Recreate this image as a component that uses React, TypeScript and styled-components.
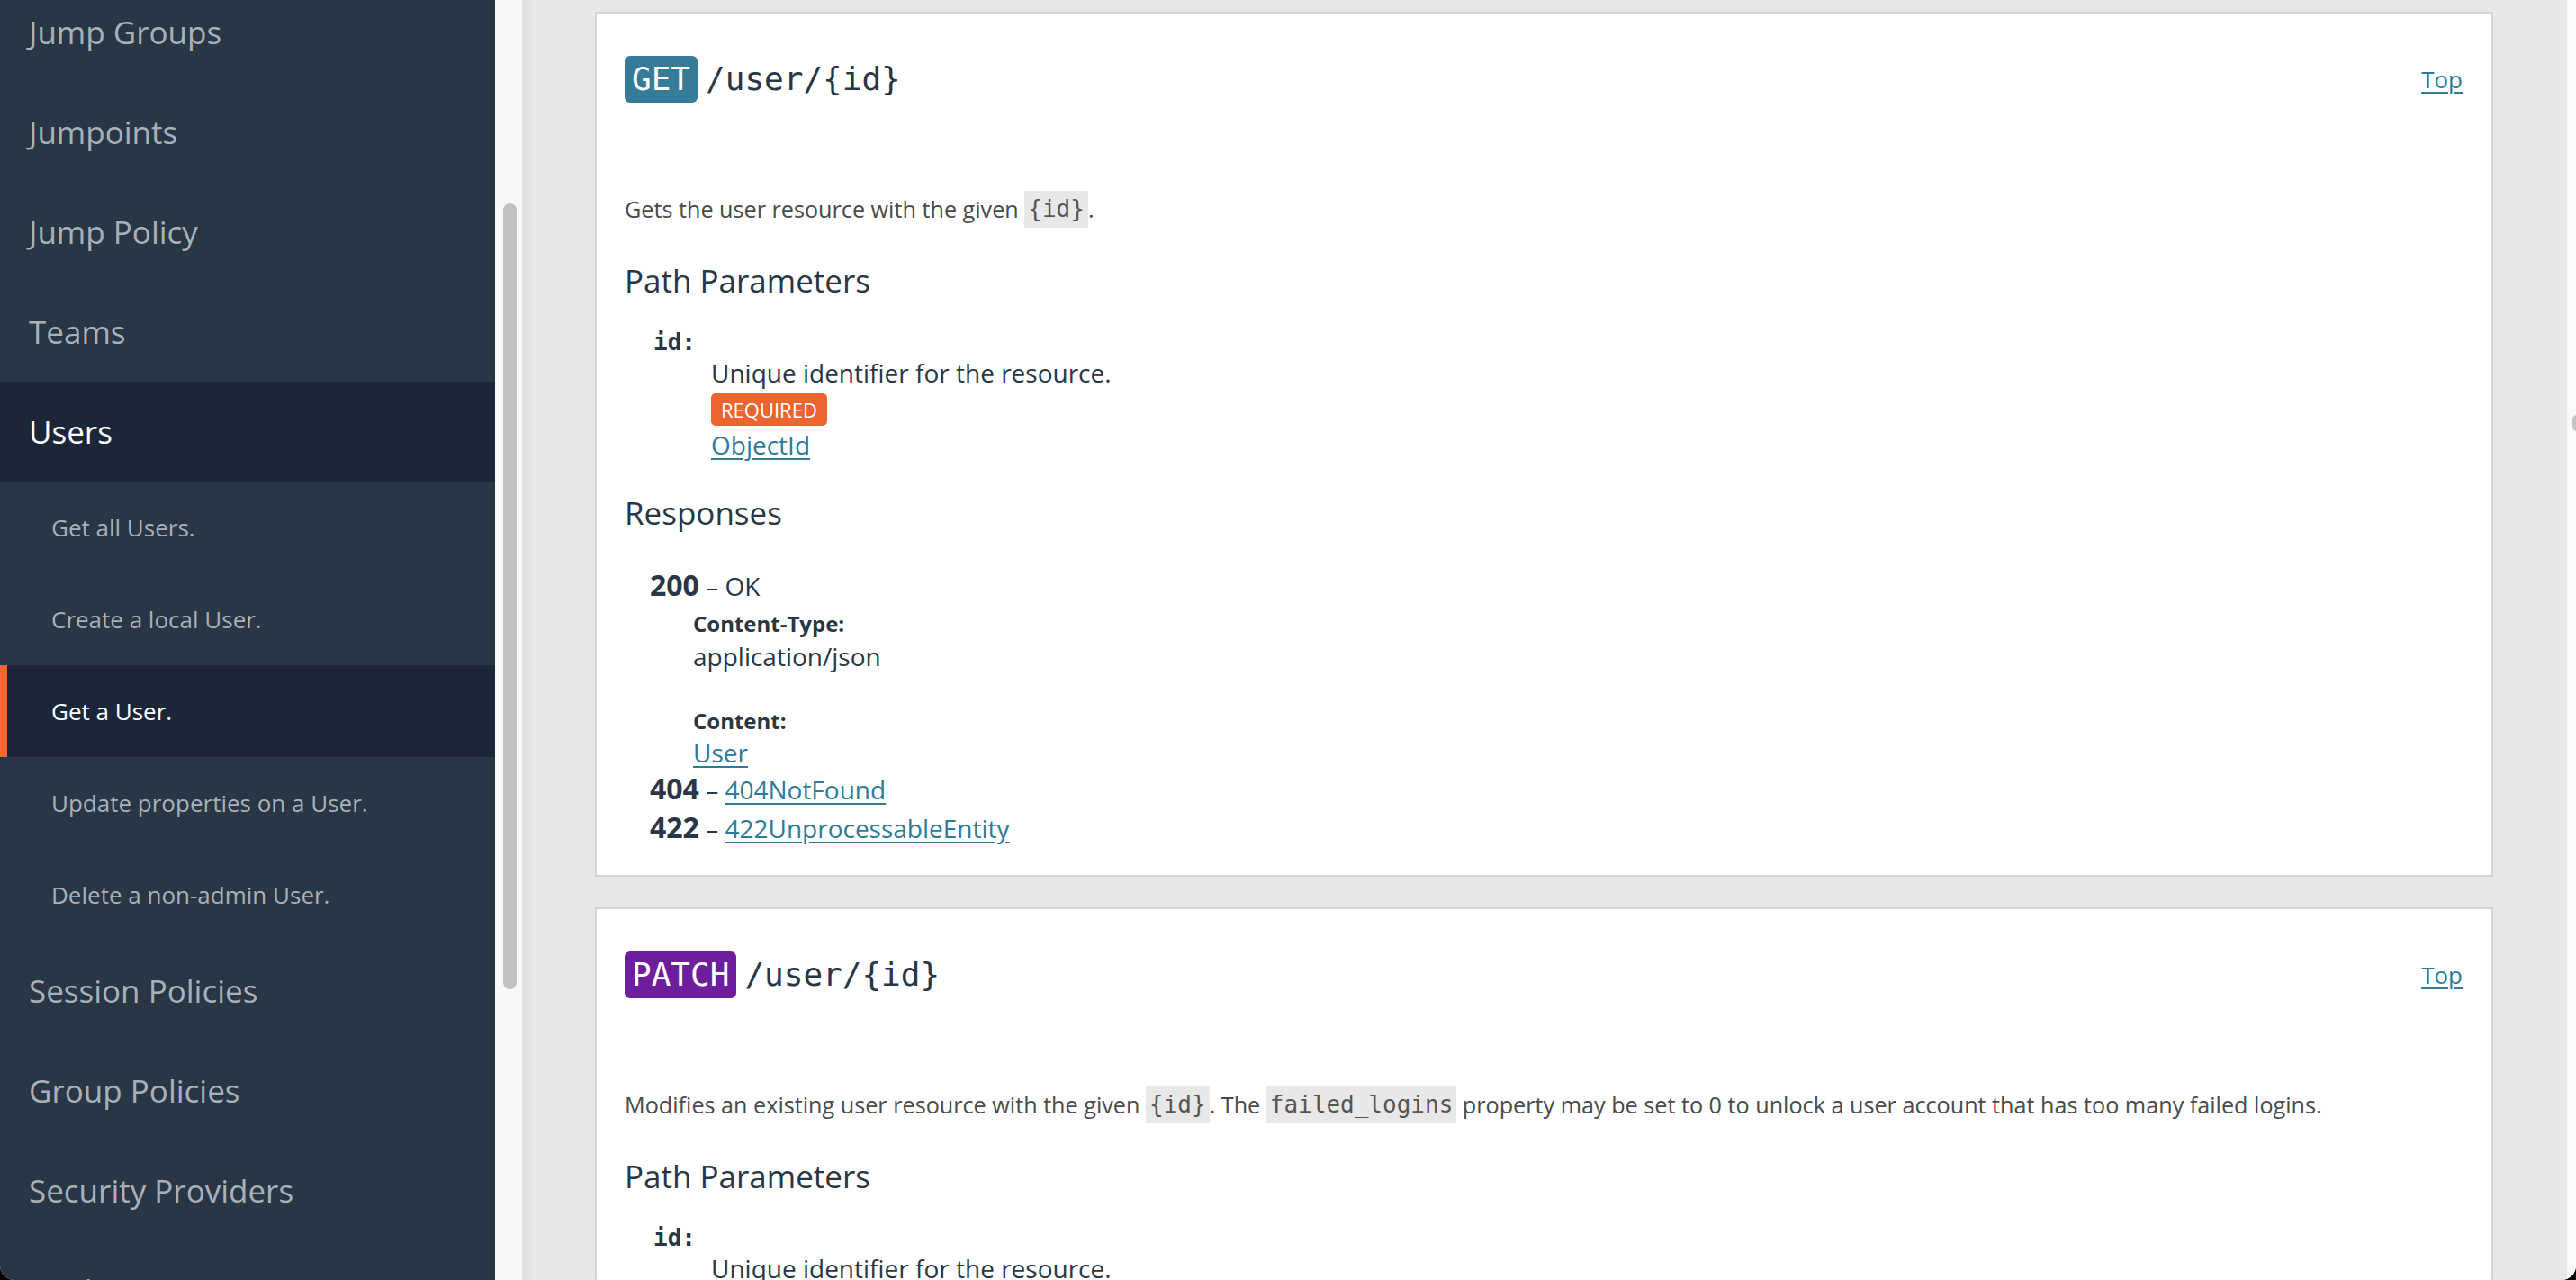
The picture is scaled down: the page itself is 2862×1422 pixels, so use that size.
import styled, { createGlobalStyle } from 'styled-components';

interface NavEntry {
  label: string;
  active?: boolean;
  children?: { label: string; active?: boolean }[];
}

const nav: NavEntry[] = [
  { label: 'Jump Groups' },
  { label: 'Jumpoints' },
  { label: 'Jump Policy' },
  { label: 'Teams' },
  {
    label: 'Users',
    active: true,
    children: [
      { label: 'Get all Users.' },
      { label: 'Create a local User.' },
      { label: 'Get a User.', active: true },
      { label: 'Update properties on a User.' },
      { label: 'Delete a non-admin User.' },
    ],
  },
  { label: 'Session Policies' },
  { label: 'Group Policies' },
  { label: 'Security Providers' },
  { label: 'Vault Accounts' },
];

const SANS = `'Open Sans', 'Liberation Sans', sans-serif`;
const MONO = `'DejaVu Sans Mono', 'Liberation Mono', monospace`;

const App = () => {
  return (
    <>
      <GlobalStyle />
      <S.Shell>
        <S.Sidebar>
          <S.NavList>
            {nav.map((item) => (
              <li key={item.label}>
                <S.NavItem $active={item.active}>{item.label}</S.NavItem>
                {item.children && (
                  <S.SubList>
                    {item.children.map((child) => (
                      <S.SubItem key={child.label} $active={child.active}>
                        {child.label}
                      </S.SubItem>
                    ))}
                  </S.SubList>
                )}
              </li>
            ))}
          </S.NavList>
        </S.Sidebar>
        <S.SidebarTrack>
          <S.SidebarThumb />
        </S.SidebarTrack>

        <S.Main>
          <S.Card>
            <S.CardHeader>
              <S.Title>
                <S.Method $color="#367b97">GET</S.Method>
                <S.Path>/user/{'{id}'}</S.Path>
              </S.Title>
              <S.TopLink href="#">Top</S.TopLink>
            </S.CardHeader>
            <S.Description>
              Gets the user resource with the given <S.Code>{'{id}'}</S.Code>.
            </S.Description>

            <S.SectionTitle>Path Parameters</S.SectionTitle>
            <S.ParamList>
              <S.ParamName>id:</S.ParamName>
              <S.ParamBody>
                <S.ParamDesc>Unique identifier for the resource.</S.ParamDesc>
                <S.RequiredBadge>Required</S.RequiredBadge>
                <S.TypeLink href="#">ObjectId</S.TypeLink>
              </S.ParamBody>
            </S.ParamList>

            <S.SectionTitle>Responses</S.SectionTitle>
            <S.ResponseList>
              <S.ResponseRow>
                <S.StatusCode>200</S.StatusCode> – OK
              </S.ResponseRow>
              <S.ResponseDetail>
                <S.DetailLabel>Content-Type:</S.DetailLabel>
                <S.DetailValue>application/json</S.DetailValue>
                <S.DetailLabel $gap>Content:</S.DetailLabel>
                <S.DetailValue $tight>
                  <S.InlineLink href="#">User</S.InlineLink>
                </S.DetailValue>
              </S.ResponseDetail>
              <S.ResponseRow>
                <S.StatusCode>404</S.StatusCode> – <S.InlineLink href="#">404NotFound</S.InlineLink>
              </S.ResponseRow>
              <S.ResponseRow>
                <S.StatusCode>422</S.StatusCode> –{' '}
                <S.InlineLink href="#">422UnprocessableEntity</S.InlineLink>
              </S.ResponseRow>
            </S.ResponseList>
          </S.Card>

          <S.Card>
            <S.CardHeader>
              <S.Title>
                <S.Method $color="#6e1d9c">PATCH</S.Method>
                <S.Path>/user/{'{id}'}</S.Path>
              </S.Title>
              <S.TopLink href="#">Top</S.TopLink>
            </S.CardHeader>
            <S.Description>
              Modifies an existing user resource with the given <S.Code>{'{id}'}</S.Code>. The{' '}
              <S.Code>failed_logins</S.Code> property may be set to 0 to unlock a user account that has
              too many failed logins.
            </S.Description>

            <S.SectionTitle>Path Parameters</S.SectionTitle>
            <S.ParamList>
              <S.ParamName>id:</S.ParamName>
              <S.ParamBody>
                <S.ParamDesc>Unique identifier for the resource.</S.ParamDesc>
                <S.RequiredBadge>Required</S.RequiredBadge>
                <S.TypeLink href="#">ObjectId</S.TypeLink>
              </S.ParamBody>
            </S.ParamList>

            <S.SectionTitle>Request Body</S.SectionTitle>
          </S.Card>
        </S.Main>
        <S.PageTrack>
          <S.PageThumb />
        </S.PageTrack>
      </S.Shell>
    </>
  );
};

const GlobalStyle = createGlobalStyle`
  html, body {
    margin: 0;
    padding: 0;
    background: #000;
    overflow: hidden;
  }

  * {
    box-sizing: border-box;
  }

  ul {
    margin: 0;
    padding: 0;
    list-style: none;
  }
`;

const S = {
  Shell: styled.div`
    display: flex;
    width: 100vw;
    height: 100vh;
    overflow: hidden;
    border-radius: 0 0 16px 16px;
    background: #e6e8e7;
    font-family: ${SANS};
  `,

  Sidebar: styled.nav`
    flex: 0 0 550px;
    height: 100%;
    overflow: hidden;
    background: #283645;
  `,

  NavList: styled.ul`
    margin-top: -20px;
  `,

  NavItem: styled.div<{ $active?: boolean }>`
    height: 111px;
    padding-left: 32px;
    line-height: 111px;
    font-size: 35px;
    white-space: nowrap;
    color: ${({ $active }) => ($active ? '#ffffff' : '#a8b0b8')};
    background: ${({ $active }) => ($active ? '#1b2639' : 'transparent')};
  `,

  SubList: styled.ul``,

  SubItem: styled.li<{ $active?: boolean }>`
    height: 102px;
    padding-left: 57px;
    line-height: 102px;
    font-size: 26px;
    white-space: nowrap;
    color: ${({ $active }) => ($active ? '#ffffff' : '#a8b0b8')};
    background: ${({ $active }) => ($active ? '#1b2639' : 'transparent')};
    box-shadow: ${({ $active }) => ($active ? 'inset 8px 0 0 #ee6a31' : 'none')};
  `,

  SidebarTrack: styled.div`
    flex: 0 0 30px;
    padding: 226px 0 0 9px;
    background: #f8f8f8;
  `,

  SidebarThumb: styled.div`
    width: 15px;
    height: 873px;
    border-radius: 8px;
    background: #c1c1c1;
  `,

  Main: styled.main`
    flex: 1;
    min-width: 0;
    height: 100%;
    overflow: hidden;
    padding: 13px 82px 0 81px;
    background: #e6e8e7;
    box-shadow: inset 10px 0 14px -8px rgba(0, 0, 0, 0.06);
  `,

  Card: styled.section`
    margin-bottom: 34px;
    padding: 0 32px 31px 31px;
    border: 2px solid #d4d6d5;
    background: #ffffff;
    color: #283645;
  `,

  CardHeader: styled.div`
    display: flex;
    align-items: center;
    justify-content: space-between;
    padding-top: 47px;
  `,

  Title: styled.h2`
    display: flex;
    align-items: center;
    gap: 9px;
    margin: 0;
    font-weight: 400;
  `,

  Method: styled.span<{ $color: string }>`
    padding: 0 8px;
    border-radius: 6px;
    line-height: 52px;
    font-family: ${MONO};
    font-size: 36px;
    color: #ffffff;
    background: ${({ $color }) => $color};
  `,

  Path: styled.span`
    font-family: ${MONO};
    font-size: 36px;
    line-height: 52px;
    color: #283645;
  `,

  TopLink: styled.a`
    font-size: 26px;
    color: #2e7b99;
    text-decoration: underline;
    text-underline-offset: 4px;
  `,

  Description: styled.p`
    margin: 98px 0 0;
    font-size: 25.2px;
    line-height: 41px;
    color: #4a4a4a;
  `,

  Code: styled.code`
    display: inline-block;
    padding: 0 4px;
    vertical-align: top;
    font-family: ${MONO};
    font-size: 26px;
    line-height: 41px;
    color: #555555;
    background: #e8e8e8;
  `,

  SectionTitle: styled.h3`
    margin: 35px 0 0;
    font-size: 35px;
    font-weight: 400;
    line-height: 48px;
    color: #283645;
  `,

  ParamList: styled.dl`
    margin: 27px 0 0 32px;
  `,

  ParamName: styled.dt`
    font-family: ${MONO};
    font-size: 26px;
    font-weight: 700;
    line-height: 34px;
  `,

  ParamBody: styled.dd`
    display: flex;
    flex-direction: column;
    align-items: flex-start;
    margin: 0 0 0 64px;
  `,

  ParamDesc: styled.span`
    font-size: 28px;
    line-height: 34px;
  `,

  RequiredBadge: styled.span`
    margin-top: 6px;
    padding: 0 11px;
    border-radius: 5px;
    line-height: 36px;
    font-size: 22px;
    text-transform: uppercase;
    color: #ffffff;
    background: #ec6430;
  `,

  TypeLink: styled.a`
    margin-top: 4px;
    font-size: 28px;
    line-height: 34px;
    color: #2e7b99;
    text-underline-offset: 4px;
  `,

  ResponseList: styled.div`
    margin: 35px 0 0 28px;
  `,

  ResponseRow: styled.div`
    font-size: 28px;
    line-height: 41px;
    white-space: nowrap;
  `,

  StatusCode: styled.strong`
    font-size: 32px;
    font-weight: 700;
  `,

  ResponseDetail: styled.div`
    display: flex;
    flex-direction: column;
    align-items: flex-start;
    margin: 5px 0 0 48px;
  `,

  DetailLabel: styled.span<{ $gap?: boolean }>`
    margin-top: ${({ $gap }) => ($gap ? '36px' : '0')};
    font-size: 24px;
    font-weight: 700;
    line-height: 32px;
  `,

  DetailValue: styled.span<{ $tight?: boolean }>`
    font-size: 28px;
    line-height: ${({ $tight }) => ($tight ? '38px' : '40px')};
  `,

  InlineLink: styled.a`
    color: #2e7b99;
    text-underline-offset: 4px;
  `,

  PageTrack: styled.div`
    flex: 0 0 10px;
    padding-top: 461px;
    overflow: hidden;
    background: #f9f9f9;
  `,

  PageThumb: styled.div`
    width: 10px;
    height: 18px;
    margin-left: 6px;
    border-radius: 9px;
    background: #c4c4c4;
  `,
};

export default App;
